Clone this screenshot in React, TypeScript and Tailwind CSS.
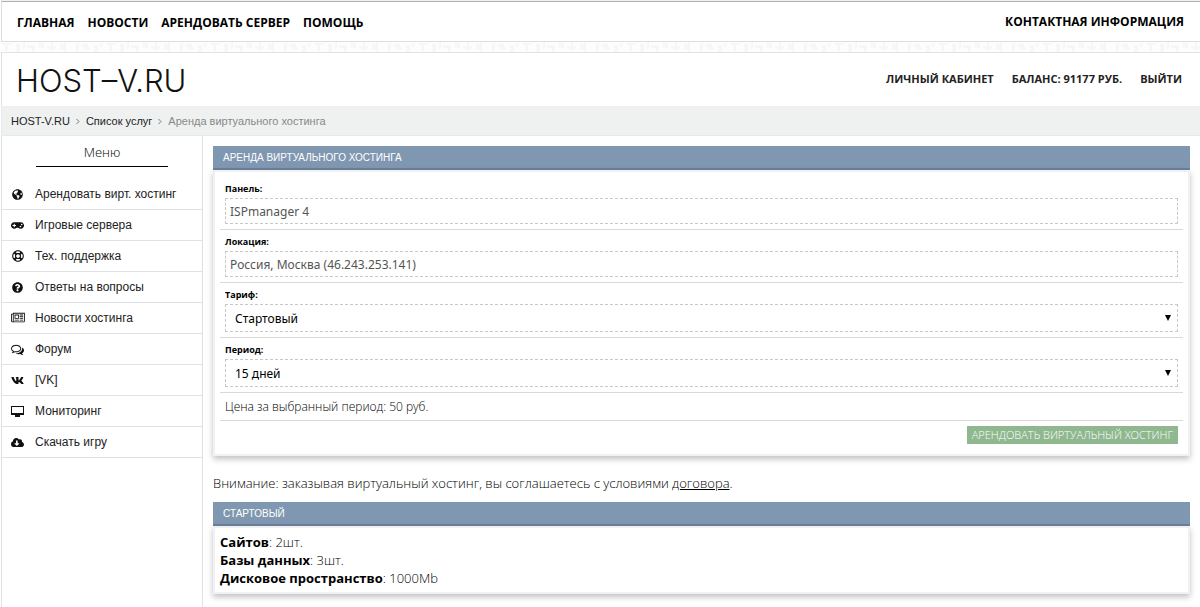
import { useState } from "react";
import type { ComponentType, ReactNode } from "react";
import { FaCloudDownloadAlt, FaGamepad, FaGlobeAmericas, FaQuestionCircle, FaRegLifeRing, FaVk } from "react-icons/fa";

type IconType = ComponentType<{ className?: string }>;
type MenuItem = { label: string; icon: IconType; size: string };

function NewsIcon({ className }: { className?: string }) {
  return (
    <svg className={className} viewBox="0 0 2048 1792" fill="currentColor" aria-hidden="true">
      <path d="M1024 512h-384v384h384v-384zm128 640v128h-640v-128h640zm0-768v640h-640v-640h640zm640 768v128h-512v-128h512zm0-256v128h-512v-128h512zm0-256v128h-512v-128h512zm0-256v128h-512v-128h512zm-1536 960v-960h-128v960q0 26 19 45t45 19 45-19 19-45zm1664 0v-1088h-1536v1088q0 33-11 64h1483q26 0 45-19t19-45zm128-1216v1216q0 80-56 136t-136 56h-1664q-80 0-136-56t-56-136v-1088h256v-128h1792z" />
    </svg>
  );
}

function CommentsIcon({ className }: { className?: string }) {
  return (
    <svg className={className} viewBox="0 0 1792 1792" fill="currentColor" aria-hidden="true">
      <path d="M704 384q-153 0-286 52t-211.500 141-78.500 191q0 82 53 158t149 132l97 56-35 84q34-20 62-39l44-31 53 10q78 14 153 14 153 0 286-52t211.500-141 78.500-191-78.500-191-211.500-141-286-52zm0-128q191 0 353.500 68.500t256.500 186.500 94 257-94 257-256.500 186.500-353.500 68.500q-86 0-176-16-124 88-278 128-36 9-86 16h-3q-11 0-20.500-8t-11.500-21q-1-3-1-6.500t.5-6.500 2-6l2.500-5 3.500-5.500 4-5 4.500-5 4-4.500q5-6 23-25t26-29.500 22.500-29 25-38.500 20.500-44q-124-72-195-177t-71-224q0-139 94-257t256.500-186.500 353.500-68.500zm822 1169q10 24 20.500 44t25 38.500 22.500 29 26 29.500 23 25q1 1 4 4.500t4.500 5 4 5 3.500 5.500l2.500 5 2 6 .5 6.500-1 6.500q-3 14-13 22t-22 7q-50-7-86-16-154-40-278-128-90 16-176 16-271 0-472-132 58 4 88 4 161 0 309-45t264-129q125-92 192-212t67-254q0-77-23-152 129 71 204 178t75 230q0 120-71 224.500t-195 176.500z" />
    </svg>
  );
}

function MonitorIcon({ className }: { className?: string }) {
  return (
    <svg className={className} viewBox="0 0 13 11" fill="currentColor" shapeRendering="crispEdges" aria-hidden="true">
      <path d="M0 0h13v9H9v2H4V9H0zM1 1v6h11V1z" fillRule="evenodd" />
    </svg>
  );
}

const TOP_LINKS = ["Главная", "Новости", "Арендовать сервер", "Помощь"];
const USER_LINKS = ["Личный кабинет", "Баланс: 91177 руб.", "Выйти"];

const MENU: MenuItem[] = [
  { label: "Арендовать вирт. хостинг", icon: FaGlobeAmericas, size: "size-[11px]" },
  { label: "Игровые сервера", icon: FaGamepad, size: "size-[13px]" },
  { label: "Тех. поддержка", icon: FaRegLifeRing, size: "size-3" },
  { label: "Ответы на вопросы", icon: FaQuestionCircle, size: "size-[11px]" },
  { label: "Новости хостинга", icon: NewsIcon, size: "h-3 w-[14px]" },
  { label: "Форум", icon: CommentsIcon, size: "size-[13px]" },
  { label: "[VK]", icon: FaVk, size: "size-[13px]" },
  { label: "Мониторинг", icon: MonitorIcon, size: "h-[11px] w-[13px]" },
  { label: "Скачать игру", icon: FaCloudDownloadAlt, size: "size-[13px]" },
];

const SPECS = [
  ["Сайтов", "2шт."],
  ["Базы данных", "3шт."],
  ["Дисковое пространство", "1000Mb"],
];

// faint strip of paper grain between the two bars
function Texture() {
  return (
    <svg className="block h-[10px] w-full bg-[#fdfdfd]" aria-hidden="true">
      <defs>
        <pattern id="grain" width="104" height="10" patternUnits="userSpaceOnUse">
          <g fill="#f7f7f6">
            <rect x="2" y="1" width="8" height="2" />
            <rect x="4" y="3" width="3" height="6" />
            <rect x="15" y="2" width="4" height="8" />
            <rect x="22" y="0" width="2" height="7" />
            <rect x="26" y="3" width="7" height="3" />
            <rect x="31" y="5" width="3" height="5" />
            <rect x="38" y="1" width="5" height="5" />
            <rect x="46" y="4" width="9" height="3" />
            <rect x="50" y="0" width="2" height="9" />
            <rect x="59" y="2" width="4" height="6" />
            <rect x="63" y="0" width="2" height="10" />
            <rect x="75" y="1" width="3" height="9" />
            <rect x="81" y="2" width="6" height="3" />
            <rect x="84" y="5" width="5" height="3" />
            <rect x="93" y="3" width="4" height="7" />
            <rect x="99" y="1" width="3" height="4" />
          </g>
        </pattern>
      </defs>
      <rect width="100%" height="100%" fill="url(#grain)" />
    </svg>
  );
}

function Chevron() {
  return (
    <svg className="h-[7px] w-1 text-[#777]" viewBox="0 0 4 7" fill="none" stroke="currentColor" aria-hidden="true">
      <path d="M.5 1l2.500 2.500L.5 6" />
    </svg>
  );
}

function Panel({ title, children }: { title: string; children: ReactNode }) {
  return (
    <section>
      <h2 className="h-6 border-b-2 border-[#6c8199] bg-[#8097b1] px-[10px] font-['Liberation_Sans',sans-serif] text-[10px] leading-[23px] text-white uppercase">{title}</h2>
      <div className="border-2 border-[#f0f1f5] bg-white p-[5px] shadow-[0_3px_6px_rgba(0,0,0,0.25)]">{children}</div>
    </section>
  );
}

function Field({ id, label, children }: { id: string; label: string; children: ReactNode }) {
  return (
    <div className="border-b border-[#d9d9d9] px-[5px] pb-[5px]">
      <label htmlFor={id} className="block h-[21px] text-[9px] leading-[23px] font-bold text-black">{label}</label>
      {children}
    </div>
  );
}

function TextField({ id, label, value }: { id: string; label: string; value: string }) {
  return (
    <Field id={id} label={label}>
      <input id={id} type="text" readOnly value={value} className="block h-[26px] w-full border border-dashed border-[#c8c8c8] px-1 font-['Noto_Sans',sans-serif] text-[12px] text-[#555]" />
    </Field>
  );
}

function SelectField({ id, label, options }: { id: string; label: string; options: string[] }) {
  const [value, setValue] = useState(options[0]);
  return (
    <Field id={id} label={label}>
      <div className="relative">
        <select id={id} value={value} onChange={(e) => setValue(e.target.value)} className="block h-7 w-full appearance-none border border-dashed border-[#c8c8c8] bg-white px-[9px] pt-[2px] font-['Noto_Sans',sans-serif] text-[12px] text-black">
          {options.map((o) => <option key={o}>{o}</option>)}
        </select>
        <svg className="pointer-events-none absolute top-[11px] right-[7px] h-[6px] w-[6px]" viewBox="0 0 6 6" aria-hidden="true"><path d="M0 0h6L3 6z" /></svg>
      </div>
    </Field>
  );
}

export default function App() {
  return (
    <div className="min-h-screen border-t border-[#f0f1f1] bg-white pl-px font-['Open_Sans',sans-serif] text-[12px] text-black">
      <nav className="flex h-[41px] items-center justify-between border-t border-b border-l border-t-[#b0b0b0] border-b-[#dedede] border-l-[#dedede] pr-4 pl-[15px] font-bold uppercase">
        <div className="flex gap-[13px] pt-[2px]">
          {TOP_LINKS.map((t) => <a key={t} href="#">{t}</a>)}
        </div>
        <a href="#">Контактная информация</a>
      </nav>
      <Texture />
      <header className="flex h-[54px] items-center justify-between border-t border-l border-[#e2e2e2] pr-[18px] pl-[14px]">
        <a href="#" className="pt-[2px] font-['Inter',sans-serif] text-[31px] leading-[52px] font-light text-[#111]">HOST–V.RU</a>
        <div className="flex gap-[18px] text-[11px] font-bold text-[#222] uppercase">
          {USER_LINKS.map((t) => <a key={t} href="#">{t}</a>)}
        </div>
      </header>
      <div className="flex h-[30px] items-center gap-[6px] border-b border-l border-[#e8eaea] bg-[#eff1f1] pt-px pl-[9px] font-['Liberation_Sans',sans-serif] text-[11px] text-[#222]">
        <a href="#">HOST-V.RU</a>
        <Chevron />
        <a href="#">Список услуг</a>
        <Chevron />
        <span className="text-[#888]">Аренда виртуального хостинга</span>
      </div>
      <div className="flex">
        <aside className="min-h-[471px] w-[202px] shrink-0 border-r border-l border-[#dfe1e4]">
          <h3 className="mx-auto mb-3 h-[31px] w-[132px] border-b border-black text-center text-[13px] leading-[32px] font-light">Меню</h3>
          <ul>
            {MENU.map(({ label, icon: Icon, size }) => (
              <li key={label} className="border-b border-[#dfe3e7]">
                <a href="#" className="flex h-[30px] items-center gap-[10px] pl-2 font-['Liberation_Sans',sans-serif] text-[12px] text-[#222]">
                  <span className="flex w-[15px] justify-center text-[#111]"><Icon className={size} /></span>
                  {label}
                </a>
              </li>
            ))}
          </ul>
        </aside>
        <main className="min-w-0 flex-1 p-[10px]">
          <Panel title="Аренда виртуального хостинга">
            <form onSubmit={(e) => e.preventDefault()}>
              <TextField id="panel" label="Панель:" value="ISPmanager 4" />
              <TextField id="location" label="Локация:" value="Россия, Москва (46.243.253.141)" />
              <SelectField id="tariff" label="Тариф:" options={["Стартовый"]} />
              <SelectField id="period" label="Период:" options={["15 дней"]} />
              <p className="h-7 border-b border-[#d9d9d9] px-[5px] leading-[27px] font-light">Цена за выбранный период: 50 руб.</p>
              <div className="flex justify-end p-[5px]">
                <button type="submit" className="h-[18px] bg-[#8fb88f] px-[5px] text-[11px] leading-[18px] font-light text-white uppercase">Арендовать виртуальный хостинг</button>
              </div>
            </form>
          </Panel>
          <p className="mt-[18px] mb-[10px] text-[13px] leading-[18px] font-light">
            Внимание: заказывая виртуальный хостинг, вы соглашаетесь с условиями <a href="#" className="underline">договора</a>.
          </p>
          <Panel title="Стартовый">
            <ul className="text-[13px] leading-[18px] font-light">
              {SPECS.map(([name, value]) => <li key={name}><b className="font-bold">{name}</b>: {value}</li>)}
            </ul>
          </Panel>
        </main>
      </div>
    </div>
  );
}
